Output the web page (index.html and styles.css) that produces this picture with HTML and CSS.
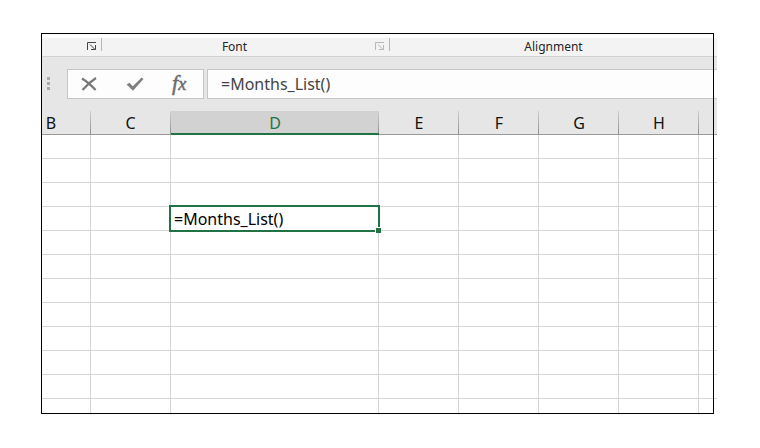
FILE: index.html
```html
<!DOCTYPE html>
<html lang="en">
<head>
<meta charset="utf-8">
<title>Months_List</title>
<link rel="stylesheet" href="styles.css">
</head>
<body>
<main class="window">
  <div class="ribbon">
    <div class="group first"><svg class="launcher" viewBox="0 0 10 9"><path d="M.5 8V.5H9M3 2.500l5 5M8.500 3v4.500H4"/></svg></div>
    <div class="group font"><span>Font</span><svg class="launcher faded" viewBox="0 0 10 9"><path d="M.5 8V.5H9M3 2.500l5 5M8.500 3v4.500H4"/></svg></div>
    <div class="group align"><span>Alignment</span></div>
  </div>
  <div class="formula-bar">
    <div class="grip"><i></i><i></i><i></i></div>
    <div class="tools">
      <svg class="tool" viewBox="0 0 16 16"><path d="M1 2.500Q7.500 6.500 14.600 14M15 2Q8 6.500 1.500 14" fill="none" stroke="#777" stroke-width="2.100"/></svg>
      <svg class="tool check" viewBox="0 0 18 16"><path d="M.6 8.600 3.400 6.800l3.400 3.400L15.600 1.600l1.900 1.500L7 14.800z" fill="#808080"/></svg>
      <span class="fx">f<small>x</small></span>
    </div>
    <div class="entry"><span>=Months_List()</span></div>
  </div>
  <div class="headings">
    <div class="b">B</div><div>C</div><div class="selected">D</div><div>E</div><div>F</div><div>G</div><div>H</div><div class="last"></div>
  </div>
  <div class="cells">
    <div class="selection"><span>=Months_List()</span><i class="handle"></i></div>
  </div>
  <div class="frame"></div>
</main>
</body>
</html>
```
FILE: styles.css
```css
* { box-sizing: border-box; }
body { margin: 0; background: #fff; font-family: "Noto Sans", "Open Sans", sans-serif; }
.window { position: relative; width: 675px; height: 377px; margin: 38px 0 0 42px; display: flex; flex-direction: column; }
.frame { position: absolute; left: -1px; top: -5px; width: 673px; height: 381px; border: 1px solid #000; }
.ribbon { height: 19px; background: #f3f3f3; border-bottom: 1px solid #d2d2d2; display: flex; font-size: 12px; line-height: 17px; color: #262626; }
.group { position: relative; height: 13px; display: flex; justify-content: center; border-right: 1px solid #b5b5b5; }
.first { width: 60px; }
.font { width: 288px; padding-right: 22px; }
.align { width: 327px; border: 0; }
.launcher { position: absolute; right: 4px; top: 4px; width: 10px; height: 9px; fill: none; stroke: #444; }
.faded { stroke: #b8b8b8; }
.formula-bar { height: 54px; background: #e6e6e6; padding-top: 12px; display: flex; }
.grip { width: 25px; padding: 8px 0 0 5px; display: grid; grid-auto-rows: 3px; gap: 2px; align-content: start; }
.grip i { width: 3px; background: #aaa; }
.tools { width: 137px; height: 30px; border: 1px solid #c6c6c6; background: #fdfdfd; display: flex; align-items: center; padding-left: 13px; }
.tool { width: 16px; height: 16px; }
.check { width: 18px; margin-left: 29px; }
.fx { margin: 0 0 2px 28px; color: #6c6c6c; font: italic 22px/24px "Liberation Serif", serif; -webkit-text-stroke: .5px #6c6c6c; }
.fx small { font-size: 18px; }
.entry { flex: 1; margin-left: 3px; height: 30px; border: 1px solid #c6c6c6; border-right: 0; background: #fdfdfd; padding-left: 13px; font-size: 16px; line-height: 28px; color: #444; }
.headings { height: 24px; background: #e6e6e6; border-bottom: 1px solid #999; display: grid; grid-template-rows: 24px; grid-template-columns: 49px 80px 208px repeat(4, 80px) 18px; font-size: 16px; line-height: 25px; color: #111; text-align: center; }
.headings div { background: linear-gradient(#d0d0d0, #909090) right / 1px 100% no-repeat; border-bottom: 1px solid #999; }
.headings .b { padding-right: 31px; }
.headings div:nth-child(2) { padding-right: 1px; }
.headings .selected { background-color: #d2d2d2; border-bottom: 2px solid #217346; color: #217346; }
.headings .last { background: none; }
.cells { position: relative; height: 280px; background:
  linear-gradient(#d4d4d4, #d4d4d4) 48px 0 / 1px 100% no-repeat,
  linear-gradient(#d4d4d4, #d4d4d4) 128px 0 / 1px 100% no-repeat,
  linear-gradient(#d4d4d4, #d4d4d4) 336px 0 / 1px 100% no-repeat,
  linear-gradient(#d4d4d4, #d4d4d4) 416px 0 / 1px 100% no-repeat,
  linear-gradient(#d4d4d4, #d4d4d4) 496px 0 / 1px 100% no-repeat,
  linear-gradient(#d4d4d4, #d4d4d4) 576px 0 / 1px 100% no-repeat,
  linear-gradient(#d4d4d4, #d4d4d4) 656px 0 / 1px 100% no-repeat,
  repeating-linear-gradient(transparent 0 23px, #d4d4d4 23px 24px), #fff; }
.selection { position: absolute; left: 127px; top: 70px; width: 211px; height: 27px; border: 2px solid #217346; background: #fff; padding-left: 3px; font-size: 16px; line-height: 24px; color: #000; }
.handle { position: absolute; right: -3px; bottom: -3px; width: 6px; height: 6px; background: #217346; border: solid #fff; border-width: 1px 0 0 1px; }
```
